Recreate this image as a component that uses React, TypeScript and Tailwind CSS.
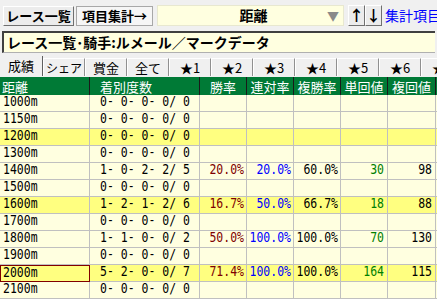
import React from "react";

const jp = { fontFamily: '"Noto Sans CJK JP", "Noto Sans", sans-serif' };
const mono = { fontFamily: '"DejaVu Sans Mono", "Liberation Mono", "Noto Sans CJK JP", monospace' };

type Row = {
  dist: string;
  rec: string;
  win?: string;
  ren?: string;
  fuku?: string;
  tan?: string;
  fret?: string;
  hl?: boolean;
  sel?: boolean;
};

const rows: Row[] = [
  { dist: "1000m", rec: "0- 0- 0- 0/ 0" },
  { dist: "1150m", rec: "0- 0- 0- 0/ 0" },
  { dist: "1200m", rec: "0- 0- 0- 0/ 0", hl: true },
  { dist: "1300m", rec: "0- 0- 0- 0/ 0" },
  { dist: "1400m", rec: "1- 0- 2- 2/ 5", win: "20.0%", ren: "20.0%", fuku: "60.0%", tan: "30", fret: "98" },
  { dist: "1500m", rec: "0- 0- 0- 0/ 0" },
  { dist: "1600m", rec: "1- 2- 1- 2/ 6", win: "16.7%", ren: "50.0%", fuku: "66.7%", tan: "18", fret: "88", hl: true },
  { dist: "1700m", rec: "0- 0- 0- 0/ 0" },
  { dist: "1800m", rec: "1- 1- 0- 0/ 2", win: "50.0%", ren: "100.0%", fuku: "100.0%", tan: "70", fret: "130" },
  { dist: "1900m", rec: "0- 0- 0- 0/ 0" },
  { dist: "2000m", rec: "5- 2- 0- 0/ 7", win: "71.4%", ren: "100.0%", fuku: "100.0%", tan: "164", fret: "115", hl: true, sel: true },
  { dist: "2100m", rec: "0- 0- 0- 0/ 0" },
];

const tabs = ["成績", "シェア", "賞金", "全て", "★1", "★2", "★3", "★4", "★5", "★6", "★7"];

const cols = "grid grid-cols-[90px_110px_47px_47px_47px_47px_48px_1fr]";
const raised = "border border-t-white border-l-white border-r-[#707070] border-b-[#707070] bg-[#ececec]";
const cell = "flex items-center border-r border-b border-[#c0c0c0]";

// tall, narrow digits like the bitmap font of the original
const Num = ({ children }: { children?: React.ReactNode }) => (
  <span className="inline-block scale-y-[1.15] whitespace-pre">{children}</span>
);

const App = () => {
  return (
    <div className="w-[437px] h-[299px] overflow-hidden bg-[#f0f0f0] text-black" style={jp}>
      {/* top toolbar */}
      <div className="flex items-center h-[31px] pl-[3px] whitespace-nowrap">
        <div className={`h-[20px] w-[71px] shrink-0 flex items-center justify-center text-[13px] font-bold ${raised}`}>
          レース一覧
        </div>
        <div className="ml-[2px] h-[20px] w-[77px] shrink-0 flex items-center justify-center text-[13px] font-bold border border-[#a8a8a8] bg-[#f6f6f6]">
          項目集計→
        </div>
        <div className="ml-[4px] h-[21px] w-[187px] shrink-0 flex items-center bg-[#ffffe0] border border-[#e8e8d0]">
          <span className="flex-1 text-center text-[14px] font-bold pl-[22px]">距離</span>
          <span className="text-[#8a8a8a] text-[12px] pr-[4px] leading-none">▼</span>
        </div>
        <div className="ml-[4px] flex shrink-0">
          <div className={`h-[21px] w-[17px] flex items-center justify-center text-[15px] font-bold ${raised}`}>↑</div>
          <div className={`h-[21px] w-[17px] flex items-center justify-center text-[15px] font-bold ${raised}`}>↓</div>
        </div>
        <span className="ml-[3px] text-[14px] text-[#0000ff]">集計項目ナビ</span>
      </div>

      {/* title */}
      <div className="mx-[2px] h-[22px] flex items-center bg-[#ffffe0] border-t-2 border-l-2 border-t-[#404040] border-l-[#404040] border-b border-b-[#b0b0b0] pl-[3px] text-[14px] font-bold whitespace-nowrap overflow-hidden">
        レース一覧･騎手:ルメール／マークデータ
      </div>

      {/* tabs */}
      <div className="mt-[3px] flex h-[20px] items-end whitespace-nowrap overflow-hidden text-[13px]">
        {tabs.map((t, i) => (
          <div
            key={i}
            className={
              i === 0
                ? "w-[43px] h-[20px] flex items-center justify-center border-r border-r-[#606060] shrink-0"
                : i === 1
                  ? "w-[42px] h-[18px] flex items-center justify-center text-[12px] border-l border-l-white border-r border-r-[#909090] border-t border-t-white shrink-0"
                  : "w-[42px] h-[18px] flex items-center justify-center border-l border-l-white border-r border-r-[#909090] border-t border-t-white shrink-0"
            }
          >
            {t}
          </div>
        ))}
      </div>

      {/* table */}
      <div className="mt-[1px]">
        <div className={`${cols} h-[18px] bg-[#007a36] text-white text-[13px] leading-none`}>
          <div className="flex items-center pl-[2px] border-r border-r-[#1a1a1a]">距離</div>
          <div className="flex items-center pl-[10px] border-r border-r-[#1a1a1a]">着別度数</div>
          <div className="flex items-center justify-center border-r border-r-[#1a1a1a]">勝率</div>
          <div className="flex items-center justify-center border-r border-r-[#1a1a1a]">連対率</div>
          <div className="flex items-center justify-center border-r border-r-[#1a1a1a]">複勝率</div>
          <div className="flex items-center justify-center border-r border-r-[#1a1a1a]">単回値</div>
          <div className="flex items-center justify-center border-r border-r-[#1a1a1a]">複回値</div>
          <div />
        </div>
        {rows.map((r) => (
          <div
            key={r.dist}
            className={`${cols} h-[17px] text-[11.5px] leading-none ${r.hl ? "bg-[#ffff80]" : "bg-[#ffffe0]"}`}
            style={mono}
          >
            <div
              className={
                r.sel
                  ? "flex items-center pl-[2px] border border-[#800000]"
                  : `${cell} pl-[3px]`
              }
            >
              <Num>{r.dist}</Num>
            </div>
            <div className={`${cell} justify-end pr-[9px]`}><Num>{r.rec}</Num></div>
            <div className={`${cell} justify-end pr-[2px] text-[#800000]`}><Num>{r.win}</Num></div>
            <div className={`${cell} justify-end pr-[2px] text-[#0000ff]`}><Num>{r.ren}</Num></div>
            <div className={`${cell} justify-end pr-[2px]`}><Num>{r.fuku}</Num></div>
            <div className={`${cell} justify-end pr-[3px] text-[#008000]`}><Num>{r.tan}</Num></div>
            <div className={`${cell} justify-end pr-[3px]`}><Num>{r.fret}</Num></div>
            <div className="border-b border-[#c0c0c0]" />
          </div>
        ))}
      </div>
    </div>
  );
};

export default App;
